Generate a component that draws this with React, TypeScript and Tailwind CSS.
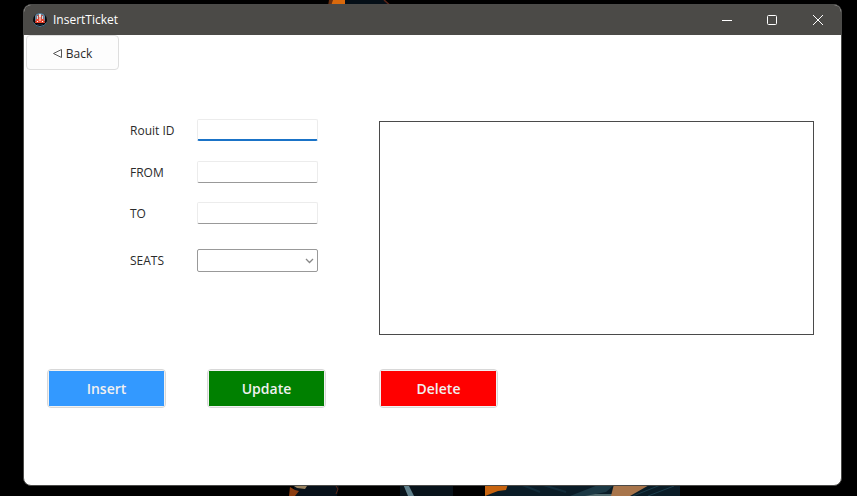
import { useState } from "react";

const actions = [
  { label: "Insert", margin: "", color: "bg-[#3399ff]" },
  { label: "Update", margin: "ml-[41px]", color: "bg-[#008000]" },
  { label: "Delete", margin: "ml-[53px]", color: "bg-[#ff0000]" },
];

const fieldClass =
  "h-[22px] w-[121px] rounded-xs border border-[#ececec] bg-white px-1 text-xs outline-none";

function Wallpaper() {
  return (
    <>
      <svg aria-hidden="true" className="absolute left-0 top-0 h-4 w-[857px]" viewBox="0 0 857 16">
        <path d="M345 0h40l6 6v10h-46z" fill="#050f17" />
        <path d="M331 0h14v16h-17z" fill="#d9690c" />
        <path d="M329 0h4l-2 6h-3z" fill="#6b3010" />
        <path d="M384 0l8 7" stroke="#5c2618" strokeWidth="1.5" />
      </svg>
      <svg aria-hidden="true" className="absolute bottom-0 left-0 h-4 w-[857px]" viewBox="0 480 857 16">
        <path d="M293 480h42l4 6-2 10h-42z" fill="#071019" />
        <path d="M290 487l5 3 4 1-4 5h-6z" fill="#8b3d10" />
        <path d="M294 486h13l-2 3-8-1z" fill="#9b8461" />
        <path d="M336 486l2 3-2 5" stroke="#5b2514" fill="none" />
        <path d="M400 480h53v16h-53z" fill="#08131b" />
        <path d="M403 484h5l6 12h-6z" fill="#5f7f8b" />
        <path d="M485 480h195v16H485z" fill="#0a1c27" />
        <path d="M485 484h23l-2 6-8 1-13 5z" fill="#c8640f" />
        <path d="M570 496l28-11h16l-8 7-20 4z" fill="#1c3945" />
        <path d="M585 496l10-2h17v2z" fill="#536c70" />
        <path d="M614 484h37l-21 12h-19z" fill="#a8754b" />
        <path d="M633 496l30-12M648 496l26-10" stroke="#1c3d4b" />
        <path d="M520 484l20 8M540 484l26 8" stroke="#122c3a" strokeWidth="2" />
      </svg>
    </>
  );
}

function TrainIcon() {
  return (
    <svg aria-hidden="true" className="size-4" viewBox="0 0 16 16">
      <circle cx="8" cy="8" r="7" fill="#07090d" />
      <path d="M3 4Q4 1 8 1t5 3v5H3z" fill="#5f87a0" />
      <path d="M5 3h6l1 7H4z" fill="#b8514a" />
      <path d="M7 2h2v3H7z" fill="#e9e4df" />
      <path d="M5 4h1v3H5zM10 4h1v3h-1z" fill="#cfd8de" />
      <path d="M4 7h8l1 4H3z" fill="#ea4630" />
      <path d="M7 5h2v4H7z" fill="#ff9c88" />
      <path d="M5 9h1v1H5zM10 9h1v1h-1z" fill="#fff" />
      <path d="M1.500 10.500Q3 14.500 8 14.500t6.500-4" fill="none" stroke="#527f97" />
      <path d="M5 12.500h6" stroke="#20242b" />
    </svg>
  );
}

function TitleBar() {
  return (
    <header className="flex h-[30px] shrink-0 items-center bg-[#4b4a47] pl-2 text-white">
      <TrainIcon />
      <h1 className="ml-[5px] flex-1 text-xs">InsertTicket</h1>
      <button type="button" aria-label="Minimize" className="flex h-full w-11 items-center justify-center">
        <svg className="size-[10px]" viewBox="0 0 10 10"><path d="M0 5.500h10" stroke="#fff" /></svg>
      </button>
      <button type="button" aria-label="Maximize" className="flex h-full w-[46px] items-center justify-center">
        <svg className="size-[10px]" viewBox="0 0 10 10"><rect x=".5" y=".5" width="9" height="9" rx="1" fill="none" stroke="#fff" /></svg>
      </button>
      <button type="button" aria-label="Close" className="flex h-full w-[46px] items-center justify-center">
        <svg className="size-[10px]" viewBox="0 0 10 10"><path d="M0 0l10 10M10 0L0 10" stroke="#fff" /></svg>
      </button>
    </header>
  );
}

function TextField({ id, label, active }: { id: string; label: string; active?: boolean }) {
  return (
    <div className="flex items-center">
      <label htmlFor={id} className="w-[67px] pt-[2px]">{label}</label>
      <input
        id={id}
        type="text"
        className={`${fieldClass} ${active ? "border-b-2 border-b-[#1a73c7]" : "border-b-[#999999]"}`}
      />
    </div>
  );
}

export default function App() {
  const [seats, setSeats] = useState("");
  return (
    <div className="relative flex min-h-screen bg-black pt-1 pr-[15px] pb-[10px] pl-[23px] font-['Open_Sans','Noto_Sans',sans-serif] text-xs text-[#2b2b2b]">
      <Wallpaper />
      <div className="relative flex flex-1 flex-col overflow-hidden rounded-lg border border-[#4b4b49] bg-white">
        <TitleBar />
        <main className="flex-1">
          <button
            type="button"
            className="ml-[2px] flex h-[35px] w-[93px] items-center justify-center gap-1 rounded-sm border border-[#dedede] bg-[#fdfdfd] pt-[2px]"
          >
            <svg aria-hidden="true" className="size-[9px]" viewBox="0 0 9 9">
              <path d="M8.500 .5v8L.5 4.500z" fill="none" stroke="#555" />
            </svg>
            Back
          </button>
          <div className="mt-[49px] flex items-start pr-[27px] pl-[106px]">
            <form className="flex flex-col">
              <TextField id="route-id" label="Rouit ID" active />
              <div className="mt-5"><TextField id="from" label="FROM" /></div>
              <div className="mt-[19px]"><TextField id="to" label="TO" /></div>
              <div className="mt-[25px] flex items-center">
                <label htmlFor="seats" className="w-[67px]">SEATS</label>
                <div className="relative">
                  <select
                    id="seats"
                    value={seats}
                    onChange={(event) => setSeats(event.target.value)}
                    className="block h-[23px] w-[121px] appearance-none rounded-xs border border-[#999999] bg-white px-1"
                  >
                    <option value="" />
                  </select>
                  <svg aria-hidden="true" className="pointer-events-none absolute top-[9px] right-1 h-[6px] w-[9px]" viewBox="0 0 9 6">
                    <path d="M1 1l3.500 3.500L8 1" fill="none" stroke="#888" strokeWidth="1.3" />
                  </svg>
                </div>
              </div>
            </form>
            <div role="listbox" aria-label="Tickets" className="mt-[2px] ml-[61px] h-[214px] flex-1 border border-[#4a4a4a] bg-white" />
          </div>
          <div className="mt-[34px] flex pl-[23px]">
            {actions.map(({ label, margin, color }) => (
              <button
                key={label}
                type="button"
                className={`${margin} h-[39px] w-[119px] rounded-sm border border-[#d8d8d8] bg-[#f2f2f2] p-px text-sm font-semibold text-[#f0f0f0]`}
              >
                <span className={`${color} flex h-full items-center justify-center pt-px`}>{label}</span>
              </button>
            ))}
          </div>
        </main>
      </div>
    </div>
  );
}
